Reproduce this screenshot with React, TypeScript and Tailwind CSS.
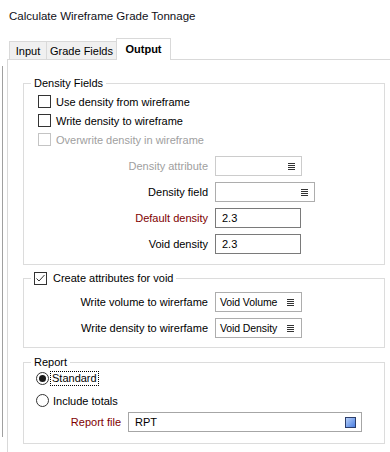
import React from "react";

function Lines() {
  return (
    <svg width="7" height="7" viewBox="0 0 7 7" className="shrink-0">
      <rect x="0" y="0" width="7" height="1" fill="#333" />
      <rect x="0" y="2" width="7" height="1" fill="#333" />
      <rect x="0" y="4" width="7" height="1" fill="#333" />
      <rect x="0" y="6" width="7" height="1" fill="#333" />
    </svg>
  );
}

function Check({ checked = false, disabled = false }: { checked?: boolean; disabled?: boolean }) {
  return (
    <span
      className={`flex h-[13px] w-[13px] shrink-0 items-center justify-center border bg-white ${
        disabled ? "border-[#c4c4c4]" : "border-[#333]"
      }`}
    >
      {checked && (
        <svg width="11" height="11" viewBox="0 0 11 11">
          <polyline points="1.5,5.5 4,8 9.5,2" fill="none" stroke="#333" strokeWidth="1" />
        </svg>
      )}
    </span>
  );
}

function Radio({ on = false }: { on?: boolean }) {
  return (
    <span className="flex h-[13px] w-[13px] shrink-0 items-center justify-center rounded-full border border-[#333] bg-white">
      {on && <span className="h-[7px] w-[7px] rounded-full bg-[#1a1a1a]" />}
    </span>
  );
}

function Field({
  label,
  labelClass = "text-black",
  labelW = "w-[184px]",
  children,
}: {
  label: string;
  labelClass?: string;
  labelW?: string;
  children: React.ReactNode;
}) {
  return (
    <div className="flex h-[20px] items-center">
      <span className={`${labelW} shrink-0 text-right ${labelClass}`}>{label}</span>
      <div className="ml-[7px] flex h-full">{children}</div>
    </div>
  );
}

export default function App() {
  return (
    <div className="relative flex h-[452px] w-[390px] flex-col overflow-hidden bg-white font-['Liberation_Sans',Arial,sans-serif] text-[11px] leading-[14px] text-black">
      <div className="absolute left-[2px] top-[66px] h-[371px] w-px bg-[#a0a0a0]" />

      <div className="h-[38px] pl-[9px] pt-[8px] text-[11.5px] leading-[16px] text-[#101018]">
        Calculate Wireframe Grade Tonnage
      </div>

      {/* tabs */}
      <div className="flex h-[21px] items-end pl-[9px]">
        <div className="flex h-[18px] w-[37px] items-center justify-center border-l border-t border-[#d9d9d9] bg-[#f0f0f0]">
          Input
        </div>
        <div className="flex h-[18px] w-[71px] items-center justify-center border-x border-t border-[#d9d9d9] bg-[#f0f0f0]">
          Grade Fields
        </div>
        <div className="relative z-10 -mb-px -ml-px flex h-[22px] w-[55px] items-center justify-center border-x border-t border-[#d9d9d9] bg-white pb-[1px] font-bold">
          Output
        </div>
      </div>

      {/* tab page */}
      <div className="ml-[7px] flex-1 border-l border-t border-[#d9d9d9] pl-[15px] pt-[16px]">
        {/* Density Fields */}
        <fieldset className="w-[362px] border border-[#dcdcdc] pb-[10px]">
          <legend className="ml-[7px] px-[3px] leading-[14px]">Density Fields</legend>
          <div className="pl-[14px] pt-[2px]">
            <div className="flex h-[19px] items-center gap-[5px]">
              <Check />
              <span>Use density from wireframe</span>
            </div>
            <div className="flex h-[19px] items-center gap-[5px]">
              <Check />
              <span>Write density to wireframe</span>
            </div>
            <div className="flex h-[19px] items-center gap-[5px] text-[#a0a0a0]">
              <Check disabled />
              <span>Overwrite density in wireframe</span>
            </div>
          </div>
          <div className="mt-[7px] flex flex-col gap-[6px]">
            <Field label="Density attribute" labelClass="text-[#a0a0a0]">
              <div className="flex w-[87px] items-center justify-end border border-[#cccccc] pr-[6px]">
                <Lines />
              </div>
            </Field>
            <Field label="Density field">
              <div className="flex w-[100px] items-center justify-end border border-[#adadad] pr-[6px]">
                <Lines />
              </div>
            </Field>
            <Field label="Default density" labelClass="text-[#800000]">
              <div className="flex w-[86px] items-center border border-[#7a7a7a] pl-[6px]">2.3</div>
            </Field>
            <Field label="Void density">
              <div className="flex w-[86px] items-center border border-[#7a7a7a] pl-[6px]">2.3</div>
            </Field>
          </div>
        </fieldset>

        {/* Create attributes for void */}
        <fieldset className="mt-[6px] w-[362px] border border-[#dcdcdc] pb-[9px]">
          <legend className="ml-[7px] flex h-[14px] items-center gap-[6px] px-[3px]">
            <Check checked />
            <span>Create attributes for void</span>
          </legend>
          <div className="flex flex-col gap-[6px] pt-[7px]">
            <Field label="Write volume to wirerfame">
              <div className="flex w-[87px] items-center justify-between border border-[#adadad] pl-[4px] pr-[7px] text-[10.5px] tracking-[-0.1px]">
                <span>Void Volume</span>
                <Lines />
              </div>
            </Field>
            <Field label="Write density to wirerfame">
              <div className="flex w-[87px] items-center justify-between border border-[#adadad] pl-[4px] pr-[7px] text-[10.5px] tracking-[-0.1px]">
                <span>Void Density</span>
                <Lines />
              </div>
            </Field>
          </div>
        </fieldset>

        {/* Report */}
        <fieldset className="mt-[7px] w-[362px] border border-[#dcdcdc] pb-[11px]">
          <legend className="ml-[7px] px-[3px] leading-[14px]">Report</legend>
          <div className="pl-[12px]">
            <div className="flex h-[19px] items-center gap-[1px]">
              <Radio on />
              <span className="border border-dotted border-black px-[1px] leading-[13px]">Standard</span>
            </div>
            <div className="mt-[3px] flex h-[19px] items-center gap-[4px]">
              <Radio />
              <span>Include totals</span>
            </div>
          </div>
          <div className="mt-[2px]">
            <Field label="Report file" labelClass="text-[#800000]" labelW="w-[97px]">
              <div className="flex w-[234px] items-center justify-between border border-[#a6a6a6] pl-[6px] pr-[5px]">
                <span>RPT</span>
                <span className="h-[11px] w-[11px] border border-[#2c3e6b] bg-gradient-to-br from-[#b9d0f7] to-[#4a7de0]" />
              </div>
            </Field>
          </div>
        </fieldset>
      </div>
    </div>
  );
}
